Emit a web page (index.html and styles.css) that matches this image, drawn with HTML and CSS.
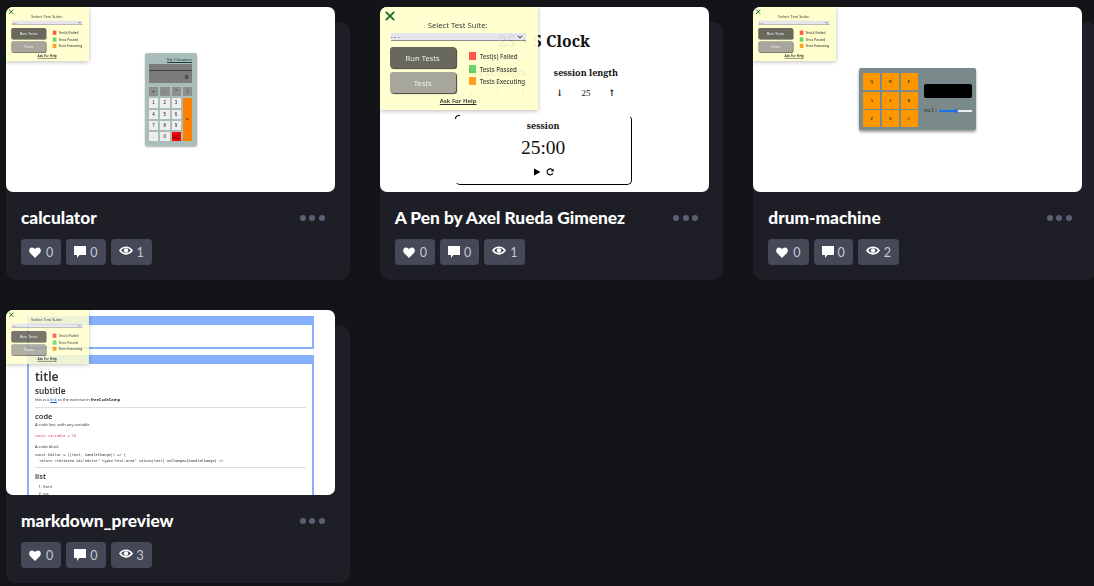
FILE: index.html
```html
<!DOCTYPE html>
<html lang="en">
<head>
<meta charset="UTF-8" />
<meta name="viewport" content="width=device-width, initial-scale=1" />
<title>Your Work - Pens</title>
<link rel="stylesheet" href="styles.css">
</head>
<body>
  <svg class="sprite" aria-hidden="true">
    <symbol id="icon-heart" viewBox="0 0 12 11">
      <path d="M6 11 L1 5.9 C-.7 4 .2 .4 3 .4 C4.4 .4 5.4 1.1 6 2.2 C6.6 1.1 7.6 .4 9 .4 C11.8 .4 12.7 4 11 5.9 Z" fill="currentColor"/>
    </symbol>
    <symbol id="icon-comment" viewBox="0 0 12 12">
      <path d="M0 0 H12 V9 H5.4 L3 12 V9 H0 Z" fill="currentColor"/>
    </symbol>
    <symbol id="icon-eye" viewBox="0 0 14 9">
      <path d="M0 4.5 C3 -1 11 -1 14 4.5 C11 10 3 10 0 4.5 Z M2.2 4.5 C4.4 7.7 9.6 7.7 11.8 4.5 C9.6 1.3 4.4 1.3 2.2 4.5 Z" fill="currentColor" fill-rule="evenodd"/>
      <circle cx="7" cy="4.5" r="2.2" fill="currentColor"/>
    </symbol>
    <symbol id="icon-close" viewBox="0 0 10 10">
      <path d="M.8 .8 L9.2 9.2 M9.2 .8 L.8 9.2" stroke="#0b6b1d" stroke-width="1.9" fill="none"/>
    </symbol>
  </svg>

  <main class="grid">

    <article class="card">
      <div class="thumb thumb-center">
        <div class="fcc-wrap small">
          <div class="fcc">
            <svg class="fcc-close"><use href="#icon-close"/></svg>
            <p class="fcc-label">Select Test Suite:</p>
            <select class="fcc-select"><option>- - -</option></select>
            <div class="fcc-row">
              <div class="fcc-btns">
                <span class="fcc-btn run">Run Tests</span>
                <span class="fcc-btn tests">Tests</span>
              </div>
              <ul class="fcc-legend">
                <li><i class="sq red"></i>Test(s) Failed</li>
                <li><i class="sq green"></i>Tests Passed</li>
                <li><i class="sq orange"></i>Tests Executing</li>
              </ul>
            </div>
            <a class="fcc-help">Ask For Help</a>
          </div>
        </div>
        <div class="calc">
          <div class="calc-title">My Claculator</div>
          <div class="calc-screen"><span class="calc-line"></span><span class="calc-val">0</span></div>
          <div class="calc-ops"><span>+</span><span>-</span><span>*</span><span>/</span></div>
          <div class="calc-keys">
            <span>1</span><span>2</span><span>3</span><span class="eq">=</span>
            <span>4</span><span>5</span><span>6</span>
            <span>7</span><span>8</span><span>9</span>
            <span>.</span><span>0</span><span class="ac">AC</span>
          </div>
        </div>
      </div>
      <div class="meta">
        <h2>calculator</h2>
        <div class="dots"><i></i><i></i><i></i></div>
      </div>
      <div class="stats">
        <span class="stat"><svg class="ico-heart"><use href="#icon-heart"/></svg>0</span>
        <span class="stat"><svg class="ico-comment"><use href="#icon-comment"/></svg>0</span>
        <span class="stat"><svg class="ico-eye"><use href="#icon-eye"/></svg>1</span>
      </div>
    </article>

    <article class="card">
      <div class="thumb clock-page">
        <div class="fcc-wrap">
          <div class="fcc">
            <svg class="fcc-close"><use href="#icon-close"/></svg>
            <p class="fcc-label">Select Test Suite:</p>
            <select class="fcc-select"><option>- - -</option></select>
            <div class="fcc-row">
              <div class="fcc-btns">
                <span class="fcc-btn run">Run Tests</span>
                <span class="fcc-btn tests">Tests</span>
              </div>
              <ul class="fcc-legend">
                <li><i class="sq red"></i>Test(s) Failed</li>
                <li><i class="sq green"></i>Tests Passed</li>
                <li><i class="sq orange"></i>Tests Executing</li>
              </ul>
            </div>
            <a class="fcc-help">Ask For Help</a>
          </div>
        </div>
        <h3 class="clock-title">25 + 5 Clock</h3>
        <div class="clock-lengths">
          <div class="clock-len">
            <h4>break length</h4>
            <div class="clock-ctrl"><span>↓</span><span class="num">5</span><span>↑</span></div>
          </div>
          <div class="clock-len">
            <h4>session length</h4>
            <div class="clock-ctrl"><span>↓</span><span class="num">25</span><span>↑</span></div>
          </div>
        </div>
        <div class="clock-box">
          <h4>session</h4>
          <div class="clock-time">25:00</div>
          <div class="clock-actions">
            <svg width="8" height="8" viewBox="0 0 8 8"><path d="M1 .5 L7.5 4 L1 7.5 Z" fill="#000"/></svg>
            <svg width="8" height="8" viewBox="0 0 8 8"><path d="M6.6 2.2 A3 3 0 1 0 6.8 5.2" stroke="#000" stroke-width="1.1" fill="none"/><path d="M7.6 .6 V3.4 H4.8 Z" fill="#000"/></svg>
          </div>
        </div>
      </div>
      <div class="meta">
        <h2>A Pen by Axel Rueda Gimenez</h2>
        <div class="dots"><i></i><i></i><i></i></div>
      </div>
      <div class="stats">
        <span class="stat"><svg class="ico-heart"><use href="#icon-heart"/></svg>0</span>
        <span class="stat"><svg class="ico-comment"><use href="#icon-comment"/></svg>0</span>
        <span class="stat"><svg class="ico-eye"><use href="#icon-eye"/></svg>1</span>
      </div>
    </article>

    <article class="card">
      <div class="thumb thumb-drum">
        <div class="fcc-wrap small">
          <div class="fcc">
            <svg class="fcc-close"><use href="#icon-close"/></svg>
            <p class="fcc-label">Select Test Suite:</p>
            <select class="fcc-select"><option>- - -</option></select>
            <div class="fcc-row">
              <div class="fcc-btns">
                <span class="fcc-btn run">Run Tests</span>
                <span class="fcc-btn tests">Tests</span>
              </div>
              <ul class="fcc-legend">
                <li><i class="sq red"></i>Test(s) Failed</li>
                <li><i class="sq green"></i>Tests Passed</li>
                <li><i class="sq orange"></i>Tests Executing</li>
              </ul>
            </div>
            <a class="fcc-help">Ask For Help</a>
          </div>
        </div>
        <div class="drum">
          <div class="drum-pads">
            <span>Q</span><span>W</span><span>E</span>
            <span>A</span><span>S</span><span>D</span>
            <span>Z</span><span>X</span><span>C</span>
          </div>
          <div class="drum-side">
            <div class="drum-display"></div>
            <div class="drum-vol">
              <span>vol:</span>
              <div class="drum-range"><i></i></div>
            </div>
          </div>
        </div>
      </div>
      <div class="meta">
        <h2>drum-machine</h2>
        <div class="dots"><i></i><i></i><i></i></div>
      </div>
      <div class="stats">
        <span class="stat"><svg class="ico-heart"><use href="#icon-heart"/></svg>0</span>
        <span class="stat"><svg class="ico-comment"><use href="#icon-comment"/></svg>0</span>
        <span class="stat"><svg class="ico-eye"><use href="#icon-eye"/></svg>2</span>
      </div>
    </article>

    <article class="card">
      <div class="thumb md-page">
        <div class="fcc-wrap small see-through">
          <div class="fcc">
            <svg class="fcc-close"><use href="#icon-close"/></svg>
            <p class="fcc-label">Select Test Suite:</p>
            <select class="fcc-select"><option>- - -</option></select>
            <div class="fcc-row">
              <div class="fcc-btns">
                <span class="fcc-btn run">Run Tests</span>
                <span class="fcc-btn tests">Tests</span>
              </div>
              <ul class="fcc-legend">
                <li><i class="sq red"></i>Test(s) Failed</li>
                <li><i class="sq green"></i>Tests Passed</li>
                <li><i class="sq orange"></i>Tests Executing</li>
              </ul>
            </div>
            <a class="fcc-help">Ask For Help</a>
          </div>
        </div>
        <div class="md-editor"><div class="md-head"></div><div class="md-area"></div></div>
        <div class="md-preview">
          <div class="md-head"></div>
          <div class="md-body">
            <h3 class="md-h1">title</h3>
            <h4 class="md-h2">subtitle</h4>
            <p>this is a <a>link</a> to the exercise in <b>freeCodeCamp</b></p>
            <hr />
            <h4 class="md-h3">code</h4>
            <p>A code line, with any variable</p>
            <code class="md-inline">const variable = 10</code>
            <p>A code block</p>
            <pre>const Editor = ({text, handleChange}) =&gt; {
  return &lt;textarea id="editor" type="text-area" value={text} onChange={handleChange} /&gt;</pre>
            <hr />
            <h4 class="md-h3">list</h4>
            <ol><li>html</li><li>css</li></ol>
          </div>
        </div>
      </div>
      <div class="meta">
        <h2>markdown_preview</h2>
        <div class="dots"><i></i><i></i><i></i></div>
      </div>
      <div class="stats">
        <span class="stat"><svg class="ico-heart"><use href="#icon-heart"/></svg>0</span>
        <span class="stat"><svg class="ico-comment"><use href="#icon-comment"/></svg>0</span>
        <span class="stat"><svg class="ico-eye"><use href="#icon-eye"/></svg>3</span>
      </div>
    </article>

  </main>
</body>
</html>
```

FILE: styles.css
```css
html, body {
  height: 100%;
}
body {
  margin: 0;
  background: #131417;
  font-family: Lato, "Open Sans", sans-serif;
  overflow: hidden;
}
.sprite {
  display: none;
}
.grid {
  display: grid;
  grid-template-columns: repeat(3, 343.67px);
  column-gap: 30px;
  row-gap: 45px;
  padding: 22px 0 0 6px;
  width: 1100px;
}

/* card */
.card {
  background: #1e1f26;
  border-radius: 10px;
  height: 258px;
  box-sizing: border-box;
}
.thumb {
  position: relative;
  overflow: hidden;
  width: 329px;
  height: 185px;
  margin-top: -15px;
  background: #fff;
  border-radius: 7px;
}
.meta {
  display: flex;
  justify-content: space-between;
  align-items: center;
  padding: 14px 25px 0 15px;
  height: 24px;
}
.meta h2 {
  margin: 0;
  color: #fff;
  font-size: 17.3px;
  line-height: 24px;
  font-weight: 900;
}
.dots {
  display: flex;
  gap: 3.5px;
}
.dots i {
  width: 6px;
  height: 6px;
  border-radius: 50%;
  background: #5a5f73;
}
.stats {
  display: flex;
  gap: 5px;
  padding: 9px 15px 0;
}
.stat {
  display: flex;
  align-items: center;
  height: 26px;
  padding: 0 8px;
  background: #444857;
  border-radius: 4px;
  color: #c7c9d3;
  font-size: 12.5px;
}
.stat svg {
  color: #fff;
  margin-right: 4px;
}
.stat .ico-heart {
  width: 12px;
  height: 11px;
  margin-right: 5px;
}
.ico-comment {
  width: 12px;
  height: 12px;
}
.ico-eye {
  width: 14px;
  height: 9px;
  margin-top: -3px;
}

/* freeCodeCamp test panel */
.fcc-wrap {
  position: absolute;
  top: 0;
  left: 0;
  z-index: 2;
  opacity: .94;
  box-shadow: 0 1px 4px rgba(0,0,0,.3);
  border-radius: 0 0 2px 0;
  width: 158px;
  height: 103px;
}
.fcc-wrap.small {
  width: 83px;
  height: 54px;
}
.fcc-wrap.small .fcc {
  transform: scale(.525);
  transform-origin: 0 0;
  filter: blur(.5px);
}
.fcc-wrap.small.see-through {
  opacity: .85;
}
.fcc {
  position: relative;
  width: 158px;
  height: 103px;
  box-sizing: border-box;
  padding: 13px 0 0 10px;
  background: #ffffcc;
  color: #333;
  font-family: "Noto Sans", sans-serif;
}
.fcc-close {
  position: absolute;
  top: 4px;
  left: 5px;
  width: 10px;
  height: 10px;
}
.fcc-label {
  margin: 0 0 3px;
  padding-right: 12px;
  text-align: center;
  font-size: 7.7px;
  line-height: 10px;
}
.fcc-select {
  display: block;
  width: 135px;
  height: 8px;
  margin: 0 0 6px 1px;
  padding: 0;
  border: none;
  border-bottom: 1px solid #888;
  border-radius: 0;
  appearance: none;
  background: #e4e4ea url("data:image/svg+xml,%3Csvg xmlns='http://www.w3.org/2000/svg' width='6' height='4'%3E%3Cpath d='M.8 .6 L3 3 L5.2 .6' stroke='%23222' fill='none'/%3E%3C/svg%3E") no-repeat right 3px center;
  color: #333;
  font-size: 6px;
  line-height: 8px;
}
.fcc-row {
  display: flex;
  gap: 13px;
}
.fcc-btns {
  display: flex;
  flex-direction: column;
  gap: 4px;
}
.fcc-btn {
  display: flex;
  align-items: center;
  justify-content: center;
  width: 66px;
  height: 21px;
  border-radius: 3px;
  color: #eee;
  font-size: 7.6px;
  box-shadow: 1px 1px 1px #333;
}
.fcc-btn.run {
  background: #605f53;
}
.fcc-btn.tests {
  background: #a1a194;
}
.fcc-legend {
  list-style: none;
  margin: 5px 0 0;
  padding: 0;
  font-size: 6.2px;
  font-weight: 500;
}
.fcc-legend li {
  display: flex;
  align-items: center;
  gap: 4px;
  height: 8px;
  margin-bottom: 5px;
}
.fcc-legend li:last-child {
  margin-top: -1px;
}
.sq {
  width: 7px;
  height: 8px;
}
.sq.red {
  background: #ff4d42;
}
.sq.green {
  background: #5fd45f;
}
.sq.orange {
  background: #ff9a14;
}
.fcc-help {
  display: block;
  margin-top: 4px;
  padding-right: 11px;
  text-align: center;
  font-size: 6px;
  line-height: 8px;
  font-weight: 600;
  color: #222;
  text-decoration: underline;
}

/* calculator thumb */
.thumb-center {
  display: flex;
  align-items: center;
  justify-content: center;
}
.calc {
  width: 52px;
  height: 93px;
  box-sizing: border-box;
  padding: 4px 4.5px;
  background: #a9bdba;
  border-radius: 2px;
  box-shadow: 0 1px 2px rgba(0,0,0,.3);
  filter: blur(.3px);
}
.calc-title {
  text-align: right;
  font-family: "Liberation Serif", serif;
  font-size: 4.3px;
  line-height: 6px;
  color: #18393f;
  text-decoration: underline;
  margin-bottom: 1px;
}
.calc-screen {
  position: relative;
  display: flex;
  align-items: flex-end;
  justify-content: flex-end;
  height: 19px;
  padding: 0 4px 3px;
  box-sizing: border-box;
  background: #7b7b7b;
  font-family: "Liberation Sans", sans-serif;
  font-size: 5px;
  font-weight: 700;
  line-height: 5px;
  color: #111;
  margin-bottom: 4px;
}
.calc-line {
  position: absolute;
  top: 6px;
  left: 0;
  right: 0;
  height: 1px;
  background: #444;
}
.calc-ops {
  display: grid;
  grid-template-columns: repeat(4, 1fr);
  gap: 2px;
  margin-bottom: 2px;
}
.calc-ops span, .calc-keys span {
  display: flex;
  align-items: center;
  justify-content: center;
  height: 9.3px;
  font-family: "Liberation Sans", sans-serif;
  font-size: 4.5px;
  color: #222;
}
.calc-ops span {
  background: #8b908f;
}
.calc-keys {
  display: grid;
  grid-template-columns: repeat(4, 1fr);
  gap: 2px;
}
.calc-keys span {
  background: #eee;
}
.calc-keys .eq {
  grid-column: 4;
  grid-row: 1 / span 4;
  height: auto;
  background: #ff8000;
}
.calc-keys .ac {
  background: #ff0000;
  color: #111;
  font-size: 5px;
}

/* clock thumb */
.clock-page {
  display: flex;
  flex-direction: column;
  align-items: center;
  font-family: "Noto Serif", "DejaVu Serif", serif;
  color: #111;
}
.clock-title {
  margin: 24px 0 0;
  font-size: 15.7px;
  line-height: 20px;
  font-weight: 700;
}
.clock-lengths {
  display: flex;
  gap: 18.5px;
  margin: 16px 5px 0 0;
}
.clock-len {
  width: 70px;
  text-align: center;
}
.clock-len h4, .clock-box h4 {
  margin: 0;
  font-size: 9px;
  line-height: 12px;
  font-weight: 700;
  white-space: nowrap;
}
.clock-ctrl {
  display: flex;
  justify-content: space-between;
  margin-top: 8px;
  padding: 0 5px;
  font-size: 9px;
  line-height: 12px;
  font-weight: 700;
}
.clock-ctrl .num {
  font-weight: 400;
  font-family: "Liberation Serif", serif;
}
.clock-box {
  position: relative;
  width: 177px;
  height: 70px;
  box-sizing: border-box;
  margin: 16px 2px 0 0;
  padding-top: 4px;
  border: 1px solid;
  border-color: transparent #000 #000 transparent;
  border-radius: 5px;
  text-align: center;
}
.clock-box::before {
  content: "";
  position: absolute;
  top: -1px;
  left: -1px;
  width: 4px;
  height: 3px;
  border-top: 1px solid #000;
  border-left: 1px solid #000;
  border-radius: 4px 0 0 0;
}
.clock-time {
  margin-top: 4px;
  font-family: "Liberation Serif", serif;
  font-size: 19.5px;
  line-height: 24px;
}
.clock-actions {
  display: flex;
  justify-content: center;
  gap: 5px;
  margin-top: 8px;
}

/* drum machine thumb */
.thumb-drum {
  display: flex;
  justify-content: center;
  padding-top: 61px;
  box-sizing: border-box;
}
.drum {
  display: flex;
  gap: 6px;
  width: 117px;
  height: 62px;
  box-sizing: border-box;
  padding: 5px 4px;
  background: #7a8a8b;
  border-radius: 2px;
  box-shadow: 0 2px 3px rgba(0,0,0,.4);
  filter: blur(.3px);
}
.drum-pads {
  display: grid;
  grid-template-columns: repeat(3, 17px);
  grid-auto-rows: 17px;
  gap: 1.6px;
}
.drum-pads span {
  display: flex;
  align-items: center;
  justify-content: center;
  background: #ff9800;
  border-radius: 1px;
  font-family: "Liberation Serif", serif;
  font-size: 4px;
  font-weight: 700;
  color: #333;
}
.drum-side {
  flex: 1;
  padding-top: 11px;
}
.drum-display {
  height: 14px;
  background: #000;
  border-radius: 2px;
}
.drum-vol {
  display: flex;
  align-items: center;
  gap: 1px;
  margin-top: 8px;
  font-family: "Liberation Mono", monospace;
  font-size: 6px;
  line-height: 10px;
  color: #2a2a2a;
}
.drum-range {
  flex: 1;
  height: 2px;
  background: #eee;
}
.drum-range i {
  display: block;
  position: relative;
  width: 50%;
  height: 2px;
  background: #1a73e8;
}
.drum-range i::after {
  content: "";
  position: absolute;
  right: -2px;
  top: -1px;
  width: 4px;
  height: 4px;
  border-radius: 50%;
  background: #1a73e8;
}

/* markdown thumb */
.md-page {
  padding: 6px 21px 0;
  box-sizing: border-box;
  font-family: "Noto Sans", sans-serif;
  color: #333;
}
.md-editor, .md-preview {
  width: 287px;
  box-sizing: border-box;
  border: 2px solid #87b0fa;
  border-top: none;
  background: #fff;
}
.md-editor {
  margin-bottom: 6px;
}
.md-head {
  height: 9px;
  background: #87b0fa;
  margin: 0 -2px;
}
.md-area {
  height: 22px;
}
.md-body {
  padding: 4px 6px;
  filter: blur(.2px);
}
.md-body h3, .md-body h4, .md-body p, .md-body ol {
  margin: 0;
}
.md-body .md-h1 {
  font-size: 12px;
  line-height: 17px;
  font-weight: 600;
}
.md-body .md-h2 {
  font-size: 8.2px;
  line-height: 12px;
  font-weight: 600;
}
.md-body .md-h3 {
  font-size: 7.5px;
  line-height: 10px;
  font-weight: 600;
}
.md-body p {
  font-size: 4px;
  line-height: 6px;
}
.md-body .md-h3 + p {
  margin-top: 1px;
}
.md-body a {
  color: #0a66c2;
  text-decoration: underline;
}
.md-body b {
  font-weight: 700;
}
.md-body hr {
  border: none;
  border-top: 1px solid #ddd;
  margin: 3px 0;
}
.md-body p + hr {
  margin-top: 4px;
}
.md-inline {
  display: block;
  margin: 5px 0;
  font-family: "DejaVu Sans Mono", monospace;
  font-size: 3.6px;
  line-height: 6px;
  color: #e0428f;
}
.md-body pre {
  margin: 2px 0 0;
  font-family: "DejaVu Sans Mono", monospace;
  font-size: 3.6px;
  line-height: 6px;
}
.md-body ol {
  padding-left: 8px;
  margin-top: 2px;
  font-size: 4px;
  line-height: 7px;
}
```
